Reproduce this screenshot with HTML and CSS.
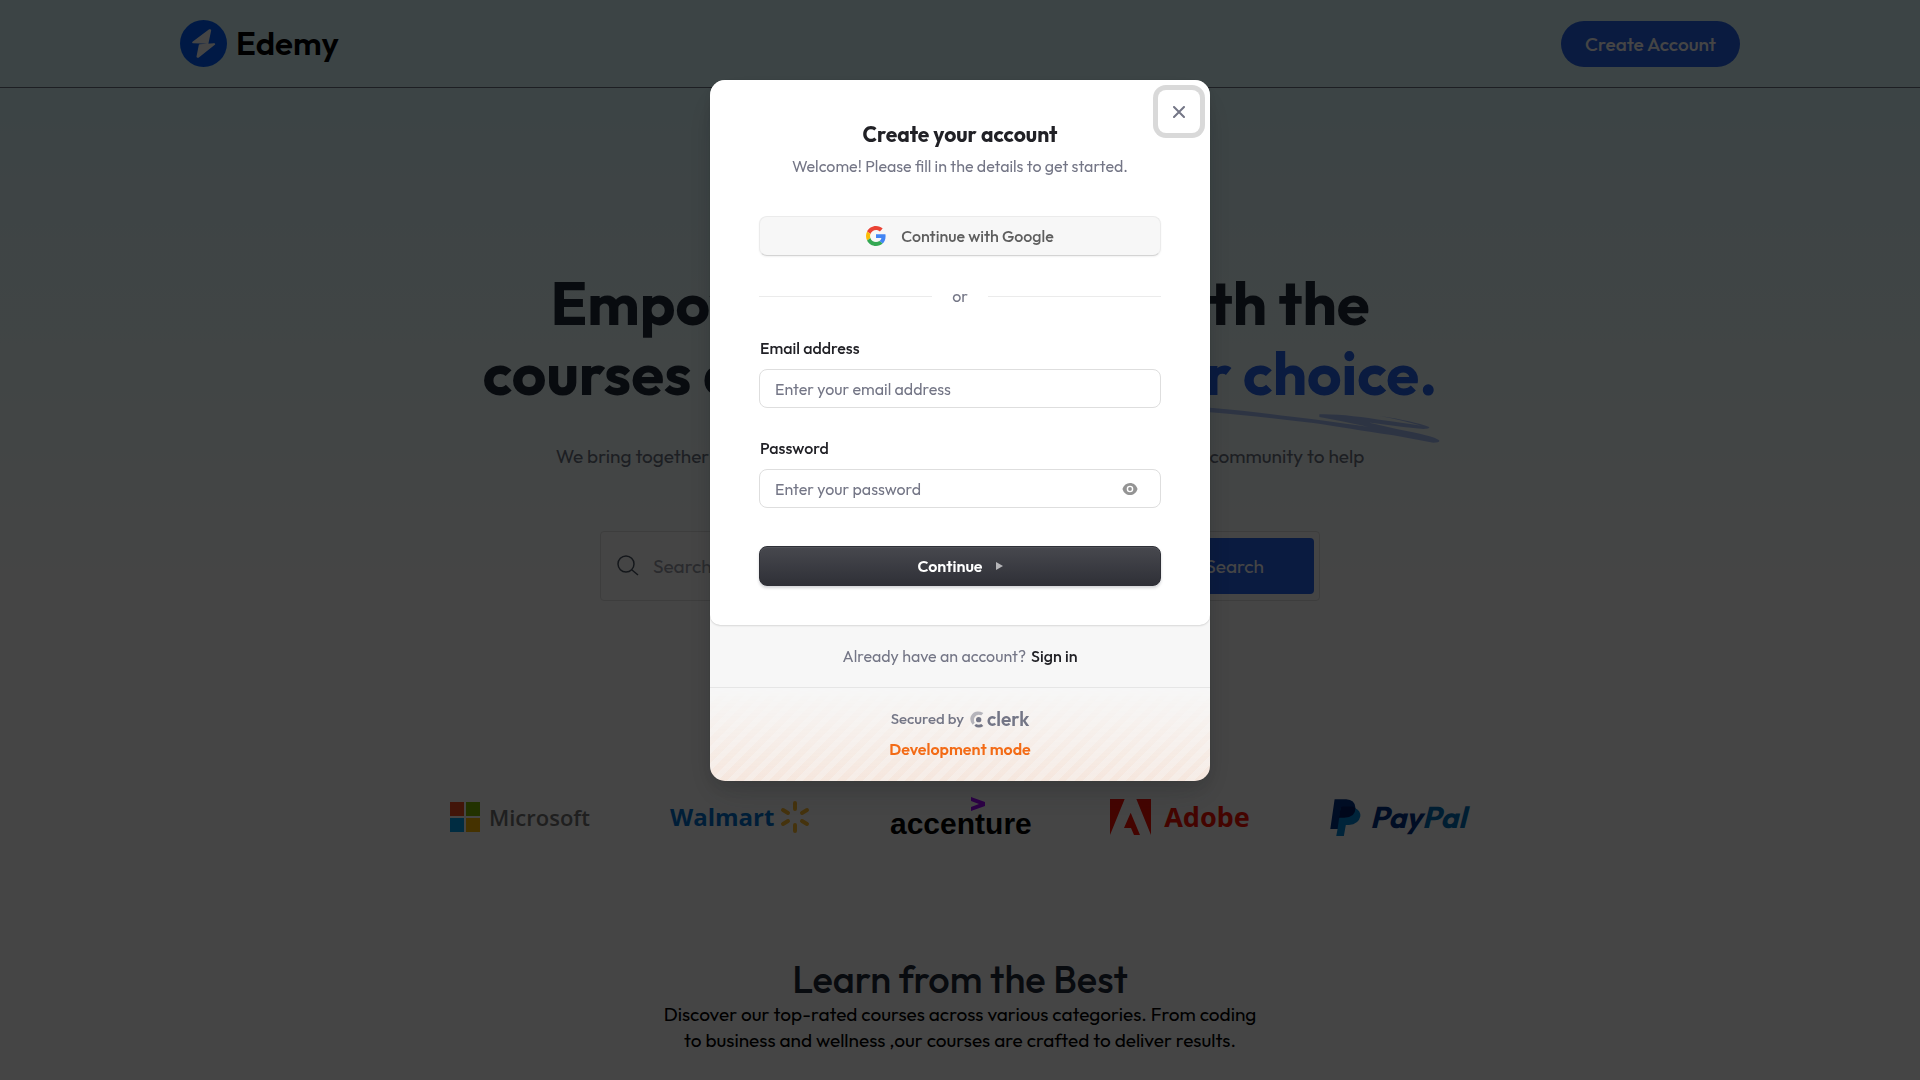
FILE: index.html
```html
<!DOCTYPE html>
<html lang="en">
<head>
<meta charset="utf-8">
<meta name="viewport" content="width=device-width, initial-scale=1">
<title>Edemy</title>
<link rel="stylesheet" href="styles.css">
</head>
<body>
<header class="navbar">
  <a class="brand" href="#">
    <svg class="brand-mark" viewBox="60 60 141 141" aria-hidden="true"><circle cx="130.500" cy="130.500" r="70.500" fill="#005fff"/><path d="M99 127 L149 90 L151 91 L143 129 Z M119 135 L163 132 L114 171 L112 170 Z" fill="#fff" stroke="#fff" stroke-width="5" stroke-linejoin="round"/></svg>
    <span>Edemy</span>
  </a>
  <button class="pill" type="button">Create Account</button>
</header>

<main>
  <section class="hero">
    <h1 class="hero-title">Empower your future with the<br>courses designed to fit <span class="accent">your choice.</span>
      <svg class="swoosh" viewBox="0 0 870 120" aria-hidden="true"><path d="M0 6 C60 5 120 8 180 14 C300 24 400 38 490 49 C580 61 660 72 730 84 C790 94 850 106 868 114 Q868 119 850 119 C810 112 770 104 730 97 C640 84 560 70 490 60 C380 46 280 36 180 28 C120 22 60 16 0 14Z M508 34 Q540 32 600 46 L740 78 Q850 98 868 112 Q868 119 850 118 Q780 106 730 90 Q640 66 508 42Z M508 34 C560 32 640 42 700 52 Q820 68 838 73 Q840 78 820 78 C740 72 660 58 600 52Z M690 39 Q790 54 838 72 L820 70 Q750 50 690 39Z"/></svg>
    </h1>
    <p class="hero-text">We bring together world-class instructors, interactive content, and supportive community to help you achieve your personal and professional goals.</p>
    <form class="search">
      <svg class="search-icon" viewBox="0 0 22 22" aria-hidden="true"><circle cx="9" cy="9" r="8"/><path d="M15 15l6 5"/></svg>
      <input class="search-input" type="text" placeholder="Search for courses" aria-label="Search for courses">
      <button class="search-button" type="button">Search</button>
    </form>
  </section>

  <section class="partners">
    <p class="partners-title">Trusted by learners from</p>
    <div class="logos">
      <div class="logo microsoft">
        <svg width="30" height="30" viewBox="0 0 30 30" aria-hidden="true"><path fill="#f25022" d="M0 0h14v14H0z"/><path fill="#7fba00" d="M16 0h14v14H16z"/><path fill="#00a4ef" d="M0 16h14v14H0z"/><path fill="#ffb900" d="M16 16h14v14H16z"/></svg>
        <span>Microsoft</span>
      </div>
      <div class="logo walmart">
        <span>Walmart</span>
        <svg width="30" height="34" viewBox="-15 -17 30 34" aria-hidden="true"><path d="M0-14V-8M0 14V8M-12-7L-7-4M12-7L7-4M-12 7L-7 4M12 7L7 4" stroke="#fdbb30" stroke-width="4" stroke-linecap="round"/></svg>
      </div>
      <div class="logo accenture">
        <svg width="14" height="14" viewBox="0 0 14 14" aria-hidden="true"><path d="M0 0L14 5V9L0 14V10L8 7L0 4Z" fill="#a100ff"/></svg>
        <span>accenture</span>
      </div>
      <div class="logo adobe">
        <svg width="41" height="36" viewBox="720 45 123 108" aria-hidden="true"><path d="M720 45H764L720 153Z M843 45V153L799 45Z M782 86L810 153H792L783 132H762Z" fill="#fa0f00"/></svg>
        <span>Adobe</span>
      </div>
      <div class="logo paypal">
        <svg width="31" height="37" viewBox="90 44 92 112" aria-hidden="true"><path d="M103 45H138Q164 46 166 70Q166 100 132 101H121L115 135H90Z" fill="#003087"/><path d="M166 72Q182 80 181 96Q176 120 146 123H137L131 156H108L112 135L121 72Z" fill="#0084d6"/><path d="M121 72Q122 68 128 67H158L166 72Q166 100 132 101H116Z" fill="#001c64"/></svg>
        <span>Pay<b>Pal</b></span>
      </div>
    </div>
  </section>

  <section class="courses">
    <h2 class="courses-title">Learn from the Best</h2>
    <p class="courses-text">Discover our top-rated courses across various categories. From coding<br>to business and wellness ,our courses are crafted to deliver results.</p>
  </section>
</main>

<div class="backdrop">
  <div class="modal" role="dialog" aria-modal="true" aria-labelledby="signup-title">
    <form class="card">
      <button class="close" type="button" aria-label="Close"><svg width="12" height="12" viewBox="0 0 12 12" aria-hidden="true"><path d="M1 1L11 11M11 1L1 11"/></svg></button>
      <h2 class="card-title" id="signup-title">Create your account</h2>
      <p class="card-subtitle">Welcome! Please fill in the details to get started.</p>
      <button class="google" type="button">
        <svg width="20" height="20" viewBox="0 0 48 48" aria-hidden="true"><path fill="#EA4335" d="M24 9.500c3.540 0 6.710 1.220 9.210 3.600l6.850-6.850C35.900 2.380 30.470 0 24 0 14.620 0 6.510 5.380 2.560 13.220l7.980 6.190C12.430 13.720 17.740 9.500 24 9.500z"/><path fill="#4285F4" d="M46.980 24.550c0-1.570-.15-3.090-.38-4.550H24v9.020h12.940c-.58 2.960-2.260 5.480-4.780 7.180l7.730 6c4.510-4.180 7.090-10.360 7.090-17.650z"/><path fill="#FBBC05" d="M10.530 28.590c-.48-1.450-.76-2.990-.76-4.590s.27-3.140.76-4.590l-7.980-6.190C.92 16.460 0 20.120 0 24c0 3.880.92 7.540 2.560 10.780l7.970-6.190z"/><path fill="#34A853" d="M24 48c6.480 0 11.930-2.130 15.890-5.810l-7.730-6c-2.150 1.450-4.920 2.300-8.160 2.300-6.260 0-11.570-4.220-13.470-9.910l-7.980 6.190C6.510 42.620 14.620 48 24 48z"/></svg>
        <span>Continue with Google</span>
      </button>
      <div class="divider"><span>or</span></div>
      <div class="field">
        <label for="email">Email address</label>
        <input class="input" id="email" type="email" placeholder="Enter your email address">
      </div>
      <div class="field">
        <label for="password">Password</label>
        <div class="password">
          <input class="input" id="password" type="password" placeholder="Enter your password">
          <button class="reveal" type="button" aria-label="Show password"><svg width="16" height="12" viewBox="0 0 16 12" aria-hidden="true"><path fill-rule="evenodd" d="M8 0C4.500 0 1.800 2.200.7 5.300Q.4 6 .7 6.700C1.800 9.800 4.500 12 8 12s6.200-2.200 7.300-5.300q.3-.7 0-1.400C14.200 2.200 11.500 0 8 0ZM8 2.700a3.300 3.300 0 1 1 0 6.600a3.300 3.300 0 0 1 0-6.600Z"/><circle cx="8" cy="6" r="1.900"/></svg></button>
        </div>
      </div>
      <button class="continue" type="button"><span>Continue</span><svg width="7" height="8" viewBox="0 0 7 8" aria-hidden="true"><path d="M0 0L7 4L0 8Z"/></svg></button>
    </form>
    <p class="signin"><span>Already have an account?</span><a href="#">Sign in</a></p>
    <div class="secured">
      <p class="secured-line">Secured by
        <a class="clerk" href="#" aria-label="Clerk"><svg width="14" height="17" viewBox="0 0 42 51" aria-hidden="true"><circle cx="26" cy="26" r="8"/><path d="M13 44L18 39Q26 43 34 39L40 45Q26 55 13 44Z"/><path opacity=".5" d="M40 6L34 13Q20 7 13 20Q10 29 14 35L8 41Q-3 28 3 15Q15-6 40 6Z"/></svg><span>clerk</span></a>
      </p>
      <p class="dev">Development mode</p>
    </div>
  </div>
</div>
</body>
</html>
```
FILE: styles.css
```css
* { box-sizing: border-box; }
html { overflow: hidden; }
body {
  margin: 0;
  background: #fff;
  color: #000;
  font-family: Outfit, Lato, "Noto Sans", sans-serif;
  font-size: 19px;
  line-height: 26px;
}
h1, h2, p { margin: 0; }
button, input { font: inherit; }
button { border: 0; cursor: pointer; }
a { color: inherit; text-decoration: none; }

/* Navigation */
.navbar {
  display: flex;
  align-items: center;
  justify-content: space-between;
  height: 88px;
  padding: 0 180px;
  border-bottom: 1px solid #6b7280;
  background: #ddfbfe;
}
.brand {
  display: flex;
  align-items: center;
  gap: 9px;
  font-size: 33px;
  font-weight: 600;
  line-height: 47px;
}
.brand-mark { width: 47px; height: 47px; }
.pill {
  height: 46px;
  padding: 0 24px;
  border-radius: 23px;
  background: #2563eb;
  color: #fff;
  font-weight: 500;
}

/* Hero */
.hero {
  display: flex;
  flex-direction: column;
  align-items: center;
  padding-top: 180px;
  background: linear-gradient(#ddfbfe, #fff);
  text-align: center;
}
.hero-title {
  position: relative;
  width: 960px;
  color: #1f2937;
  font-size: 60px;
  font-weight: 700;
  line-height: 70px;
  white-space: nowrap;
}
.accent { color: #2563eb; }
.swoosh {
  position: absolute;
  right: 0;
  bottom: -35px;
  width: 290px;
  height: 40px;
  fill: #a7c0f8;
}
.hero-text {
  max-width: 840px;
  margin-top: 35px;
  color: #6b7280;
}
.search {
  display: flex;
  align-items: center;
  width: 720px;
  height: 70px;
  margin-top: 36px;
  padding: 6px 5px;
  border: 1px solid #e0e0e0;
  border-radius: 4px;
  background: #fff;
}
.search-icon {
  width: 22px;
  height: 22px;
  margin: 0 14px 0 11px;
  fill: none;
  stroke: #4b5563;
  stroke-width: 1.5;
}
.search-input {
  flex: 1;
  min-width: 0;
  padding: 0;
  border: 0;
  outline: 0;
}
.search-input::placeholder { color: #9a9da8; opacity: 1; }
.search-button {
  height: 56px;
  padding: 0 50px;
  border-radius: 4px;
  background: #2563eb;
  color: #fff;
}

/* Partner logos */
.partners { padding-top: 120px; text-align: center; }
.partners-title { color: #6b7280; }
.logos {
  display: flex;
  justify-content: center;
  gap: 80px;
  margin-top: 46px;
}
.logo {
  display: flex;
  align-items: center;
  justify-content: space-between;
  width: 140px;
  height: 48px;
  line-height: 32px;
}
.microsoft { color: #737373; font-family: "Open Sans", sans-serif; font-size: 22px; font-weight: 600; }
.walmart { color: #0071ce; font-family: "Open Sans", sans-serif; font-size: 24px; font-weight: 700; }
.accenture {
  flex-direction: column;
  align-items: flex-start;
  justify-content: flex-start;
  font-family: "Liberation Sans", sans-serif;
  font-size: 30px;
  font-weight: 700;
  line-height: 26px;
}
.accenture svg { flex: none; margin-left: 81px; margin-top: 4px; }
.adobe { color: #fa0f00; font-family: "Noto Sans", sans-serif; font-size: 27px; font-weight: 700; }
.paypal { padding-right: 4px; color: #003087; font-size: 30px; font-style: italic; font-weight: 700; }
.paypal b { color: #0070ba; font-weight: 700; }

/* Courses */
.courses { padding: 118px 0 0; text-align: center; }
.courses-title {
  color: #1f2937;
  font-size: 38px;
  font-weight: 500;
  line-height: 40px;
}
.courses-text { margin-top: 2px; }

/* Sign-up modal */
.backdrop {
  position: fixed;
  inset: 0;
  display: flex;
  align-items: flex-start;
  justify-content: center;
  padding-top: 80px;
  background: rgba(0, 0, 0, 0.73);
}
.modal {
  width: 500px;
  overflow: hidden;
  border-radius: 15px;
  background: #f7f7f7;
  box-shadow: 0 5px 15px rgba(0, 0, 0, 0.08), 0 15px 35px -5px rgba(25, 28, 33, 0.2), 0 0 2px rgba(0, 0, 0, 0.1);
  color: #747686;
  font-size: 16px;
  line-height: 22px;
  text-align: center;
}
.card {
  position: relative;
  padding: 39px 49px;
  border-radius: 15px 15px 10px 10px;
  background: #fff;
  box-shadow: 0 1px 2px rgba(0, 0, 0, 0.12), 0 0 1px rgba(0, 0, 0, 0.12);
}
.close {
  position: absolute;
  top: 10px;
  right: 10px;
  display: grid;
  place-items: center;
  width: 42px;
  height: 43px;
  padding: 0;
  border-radius: 8px;
  background: #fff;
  box-shadow: 0 0 0 5px #d9d9d9;
}
.close svg { fill: none; stroke: #747686; stroke-width: 2; stroke-linecap: round; }
.card-title {
  color: #212126;
  font-size: 21px;
  font-weight: 700;
  line-height: 30px;
}
.card-subtitle { margin-top: 6px; }
.google, .continue {
  display: flex;
  align-items: center;
  justify-content: center;
  width: 100%;
  height: 40px;
  padding: 0;
  border-radius: 8px;
}
.google {
  gap: 15px;
  margin-top: 39px;
  border: 1px solid #ebebeb;
  border-bottom-color: #d4d4d4;
  background: #f7f7f7;
  box-shadow: 0 1px 2px rgba(0, 0, 0, 0.06);
  color: #5e5e5e;
  font-weight: 500;
}
.divider {
  display: flex;
  align-items: center;
  gap: 20px;
  margin: 29px 0 30px;
}
.divider::before, .divider::after {
  content: "";
  flex: 1;
  height: 1px;
  background: #ebebeb;
}
.field { margin-top: 29px; text-align: left; }
.field label {
  display: block;
  margin-bottom: 10px;
  padding-left: 1px;
  color: #212126;
  font-weight: 500;
}
.input {
  display: block;
  width: 100%;
  height: 39px;
  padding: 0 15px;
  border: 1px solid #dedede;
  border-radius: 8px;
  background: #fff;
  outline: 0;
}
.input::placeholder { color: #747686; opacity: 1; }
.password { position: relative; }
.reveal {
  position: absolute;
  top: 5px;
  right: 16px;
  display: grid;
  place-items: center;
  width: 30px;
  height: 30px;
  padding: 0;
  background: none;
  fill: #949494;
}
.continue {
  gap: 13px;
  margin-top: 38px;
  border: 1px solid #2f3037;
  background: linear-gradient(#47484e, #2f3037);
  box-shadow: 0 2px 3px rgba(34, 42, 53, 0.2), inset 0 1px 1px rgba(255, 255, 255, 0.07);
  color: #fff;
  font-weight: 600;
}
.continue svg { fill: #b5b5b8; }
.signin {
  display: flex;
  justify-content: center;
  gap: 5px;
  padding: 20px 0;
}
.signin a { color: #212126; font-weight: 500; }
.secured {
  position: relative;
  padding: 20px 0 21px;
  border-top: 1px solid #e6e6e6;
}
.secured::before {
  content: "";
  position: absolute;
  inset: 0;
  background: repeating-linear-gradient(-45deg, rgba(243, 107, 22, 0.07) 0 6px, rgba(243, 107, 22, 0.11) 6px 12px);
  mask-image: linear-gradient(transparent, #000);
}
.secured-line {
  position: relative;
  display: flex;
  align-items: center;
  justify-content: center;
  gap: 6px;
  font-size: 15px;
  font-weight: 500;
}
.clerk {
  display: flex;
  align-items: center;
  gap: 3px;
  fill: #747686;
  font-size: 19px;
  font-weight: 600;
}
.dev {
  position: relative;
  margin-top: 8px;
  color: #f36b16;
  font-weight: 600;
}
```
